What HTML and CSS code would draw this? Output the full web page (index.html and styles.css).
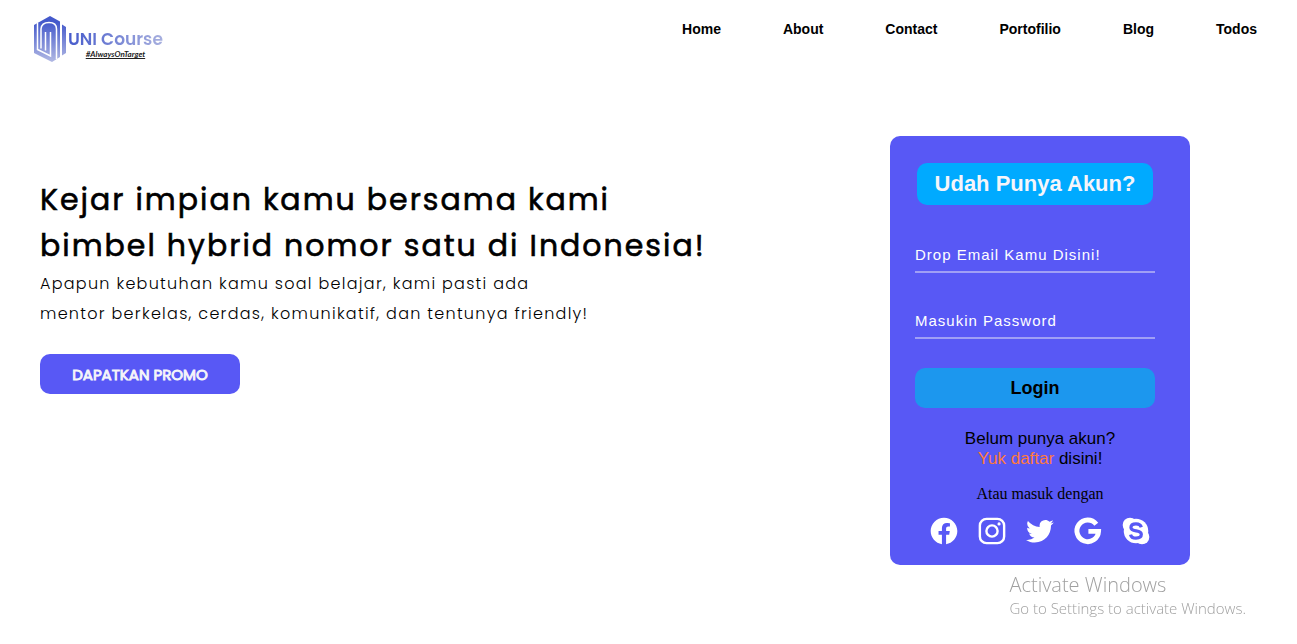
FILE: index.html
```html
<!DOCTYPE html>
<html lang="id">
<head>
<meta charset="utf-8">
<meta name="viewport" content="width=device-width, initial-scale=1">
<title>UNI Course</title>
<link rel="stylesheet" href="styles.css">
</head>
<body>
<header class="header">
  <a class="logo" href="#">
    <svg class="logo-mark" viewBox="0 0 34 48" aria-hidden="true">
      <defs>
        <linearGradient id="mark" x1="0" y1="0" x2="0" y2="48" gradientUnits="userSpaceOnUse">
          <stop offset="0.15" stop-color="#4459cb"/>
          <stop offset="1" stop-color="#b4bbe4"/>
        </linearGradient>
      </defs>
      <path fill="url(#mark)" d="M1 10 17 1 27 6.500V42L19 47 1 38ZM29 9.500 33 12V38L29 40.500Z"/>
      <path fill="none" stroke="#fff" stroke-width="1.500" d="M4.500 8V34.500L17.500 41V17M8 33.500V14Q8.500 7.500 16 7.500T23.500 14V44M12.500 35.500V17"/>
    </svg>
    <span class="logo-words">
      <span class="logo-name">UNI Course</span>
      <span class="logo-tag">#AlwaysOnTarget</span>
    </span>
  </a>
  <nav class="nav">
    <a href="#">Home</a>
    <a href="#">About</a>
    <a href="#">Contact</a>
    <a href="#">Portofilio</a>
    <a href="#">Blog</a>
    <a href="#">Todos</a>
  </nav>
</header>

<main class="main">
  <section class="hero">
    <h1 class="hero-title">Kejar impian kamu bersama kami<br>bimbel hybrid nomor satu di Indonesia!</h1>
    <p class="hero-text">Apapun kebutuhan kamu soal belajar, kami pasti ada<br>mentor berkelas, cerdas, komunikatif, dan tentunya friendly!</p>
    <button class="promo" type="button">DAPATKAN PROMO</button>
  </section>

  <section class="card">
    <form class="form">
      <h2 class="card-title">Udah Punya Akun?</h2>
      <input class="field" type="email" placeholder="Drop Email Kamu Disini!" aria-label="Email">
      <input class="field" type="password" placeholder="Masukin Password" aria-label="Password">
      <button class="login" type="button">Login</button>
    </form>
    <p class="signup">Belum punya akun?<br><a href="#">Yuk daftar</a> disini!</p>
    <p class="alt">Atau masuk dengan</p>
    <div class="social">
      <a href="#" aria-label="Facebook"><svg viewBox="0 0 24 24"><path fill="currentColor" d="M12.001 2.002c-5.522 0-9.999 4.477-9.999 9.999 0 4.990 3.656 9.126 8.437 9.879v-6.988h-2.540v-2.891h2.540V9.798c0-2.508 1.493-3.891 3.776-3.891 1.094 0 2.240.195 2.240.195v2.459h-1.264c-1.240 0-1.628.772-1.628 1.563v1.875h2.771l-.443 2.891h-2.328v6.988C18.344 21.129 22 16.992 22 12.001c0-5.522-4.477-9.999-9.999-9.999z"/></svg></a>
      <a href="#" aria-label="Instagram"><svg viewBox="0 0 24 24" fill="none" stroke="currentColor" stroke-width="1.800"><rect x="2.900" y="2.900" width="18.200" height="18.200" rx="5"/><circle cx="12" cy="12" r="4.200"/><circle cx="17.300" cy="6.700" r="1.200" fill="currentColor" stroke="none"/></svg></a>
      <a href="#" aria-label="Twitter"><svg viewBox="0 0 24 24"><path fill="currentColor" transform="translate(-.6 -.6) scale(1.060)" d="M19.633 7.997c.013.175.013.349.013.523 0 5.325-4.053 11.461-11.460 11.461-2.282 0-4.402-.661-6.186-1.809.324.037.636.050.973.050a8.070 8.070 0 0 0 5.001-1.721 4.036 4.036 0 0 1-3.767-2.793c.249.037.499.062.761.062.361 0 .724-.050 1.061-.137a4.027 4.027 0 0 1-3.230-3.953v-.050c.537.299 1.160.486 1.820.511a4.022 4.022 0 0 1-1.796-3.354c0-.748.199-1.434.548-2.032a11.457 11.457 0 0 0 8.306 4.215c-.062-.300-.100-.611-.100-.923a4.026 4.026 0 0 1 4.028-4.028c1.160 0 2.207.486 2.943 1.272a7.957 7.957 0 0 0 2.556-.973 4.020 4.020 0 0 1-1.771 2.220 8.073 8.073 0 0 0 2.319-.624 8.645 8.645 0 0 1-2.019 2.083z"/></svg></a>
      <a href="#" aria-label="Google"><svg viewBox="0 0 24 24" fill="none" stroke="currentColor" stroke-width="3.700"><path d="M18.200 6.900A8.100 8.100 0 1 0 19.900 12.300H12.300"/></svg></a>
      <a href="#" aria-label="Skype"><svg viewBox="0 0 24 24"><g fill="currentColor"><circle cx="12" cy="12" r="9.200"/><circle cx="7.500" cy="7.500" r="5.500"/><circle cx="16.500" cy="16.500" r="5.500"/></g><path class="skype-s" d="M16 9.200C15.500 7.400 13.900 6.600 12 6.600 9.800 6.600 8.200 7.600 8.200 9.400 8.200 13.100 16 10.800 16 14.500 16 16.500 14.200 17.400 12 17.400 9.900 17.400 8.300 16.500 7.900 14.700"/></svg></a>
    </div>
  </section>
</main>

<aside class="notice">
  <p class="notice-title">Activate Windows</p>
  <p class="notice-text">Go to Settings to activate Windows.</p>
</aside>
</body>
</html>
```

FILE: styles.css
```css
* {
  box-sizing: border-box;
  margin: 0;
}

body {
  background: #fff;
  color: #000;
  font-family: "Liberation Sans", Arial, sans-serif;
}

a {
  color: inherit;
  text-decoration: none;
}

.header {
  display: flex;
  justify-content: space-between;
  align-items: flex-start;
  padding: 15px 40px 0 33px;
}

.logo {
  display: flex;
}

.logo-mark {
  width: 34px;
  height: 48px;
}

.logo-words {
  display: flex;
  flex-direction: column;
  padding-top: 14px;
  padding-left: 1px;
}

.logo-name {
  background: linear-gradient(100deg, #4459cb, #a9b1df);
  background-clip: text;
  color: transparent;
  font: 600 17px/20px Poppins, Inter, sans-serif;
}

.logo-tag {
  align-self: center;
  color: #222;
  font: italic bold 8px/10px Lato, sans-serif;
  text-decoration: underline;
}

.nav {
  display: flex;
  gap: 62px;
  padding-top: 5px;
  font-size: 14px;
  font-weight: bold;
  line-height: 18px;
}

.main {
  display: flex;
  justify-content: space-between;
  align-items: flex-start;
  padding: 73px 107px 0 40px;
}

.hero {
  padding-top: 41px;
  font-family: Poppins, Inter, sans-serif;
}

.hero-title {
  font-size: 30px;
  font-weight: 400;
  letter-spacing: 2px;
  line-height: 46px;
  -webkit-text-stroke: 0.02em #000;
}

.hero-text {
  font-size: 16px;
  font-weight: 300;
  letter-spacing: 0.08em;
  line-height: 30px;
}

.promo {
  width: 200px;
  height: 40px;
  margin-top: 25px;
  border: 0;
  border-radius: 10px;
  background: #5858f5;
  color: #f5f5fa;
  font: 400 15px Poppins, Inter, sans-serif;
  -webkit-text-stroke: 0.06em #f5f5fa;
}

.card {
  width: 300px;
  padding: 27px 25px 18px;
  border-radius: 10px;
  background: #5858f5;
  text-align: center;
}

.form {
  display: flex;
  flex-direction: column;
  width: 240px;
}

.card-title {
  margin: 0 2px 31px;
  border-radius: 10px;
  background: #00aaff;
  color: #f5f5fa;
  font-size: 22px;
  line-height: 42px;
}

.field {
  width: 100%;
  height: 37px;
  margin-bottom: 29px;
  padding: 1px 0 0;
  border: 0;
  border-bottom: 2px solid #a09ff5;
  border-radius: 0;
  outline: 0;
  background: transparent;
  color: #fff;
  font: 15px "Liberation Sans", Arial, sans-serif;
  letter-spacing: 1px;
}

.field::placeholder {
  color: #fff;
}

.login {
  height: 40px;
  border: 0;
  border-radius: 10px;
  background: #1c97ee;
  color: #000;
  font: bold 18px "Liberation Sans", Arial, sans-serif;
}

.signup {
  margin-top: 21px;
  font-size: 17px;
  line-height: 20px;
}

.signup a {
  color: #ff7a3c;
}

.alt {
  margin-top: 15px;
  font: 16px/20px "Liberation Serif", "Times New Roman", serif;
}

.social {
  display: flex;
  justify-content: center;
  gap: 16px;
  margin-top: 11px;
  color: #fff;
}

.social svg {
  display: block;
  width: 32px;
  height: 32px;
}

.skype-s {
  fill: none;
  stroke: #5858f5;
  stroke-width: 2.4;
}

.notice {
  position: fixed;
  right: 51px;
  bottom: 25px;
  color: #a0a0a0;
  font-family: "Segoe UI", "Open Sans", sans-serif;
  font-weight: 300;
}

.notice-title {
  font-size: 20px;
  line-height: 24px;
}

.notice-text {
  font-size: 15px;
  line-height: 22px;
}
```
